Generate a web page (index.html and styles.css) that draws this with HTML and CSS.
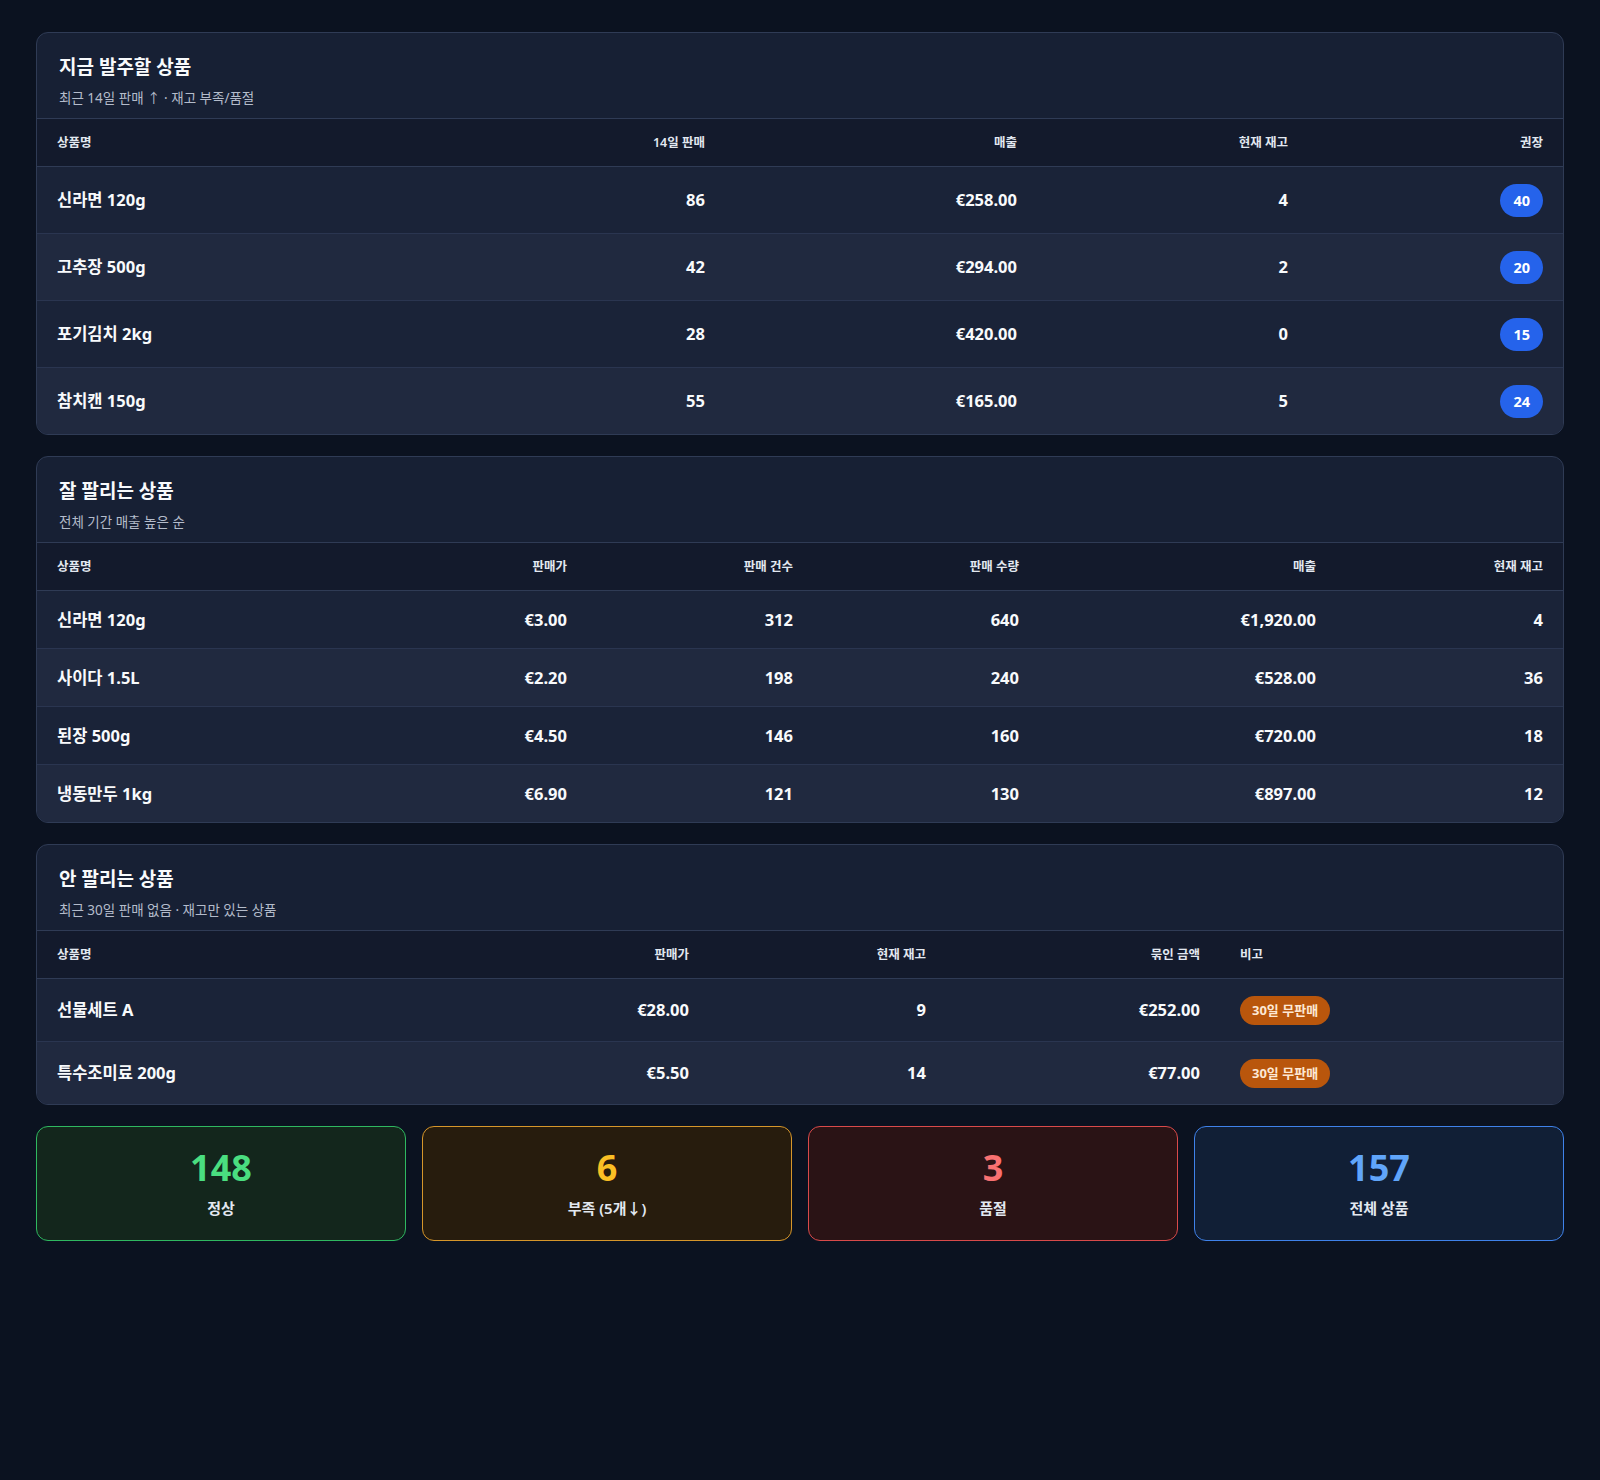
FILE: index.html
```html
<!DOCTYPE html>
<html lang="ko">
<head>
<meta charset="utf-8">
<title>재고 대시보드</title>
<link rel="stylesheet" href="styles.css">
</head>
<body>
<main class="page">

  <section class="card">
    <header class="card-head">
      <h2 class="card-title">지금 발주할 상품</h2>
      <p class="card-sub">최근 14일 판매 ↑ · 재고 부족/품절</p>
    </header>
    <table class="tbl">
      <colgroup>
        <col class="w-400"><col class="w-288"><col class="w-312"><col class="w-271"><col class="w-255">
      </colgroup>
      <thead>
        <tr><th class="l">상품명</th><th>14일 판매</th><th>매출</th><th>현재 재고</th><th>권장</th></tr>
      </thead>
      <tbody>
        <tr><td class="l">신라면 120g</td><td>86</td><td>€258.00</td><td>4</td><td><span class="pill blue">40</span></td></tr>
        <tr><td class="l">고추장 500g</td><td>42</td><td>€294.00</td><td>2</td><td><span class="pill blue">20</span></td></tr>
        <tr><td class="l">포기김치 2kg</td><td>28</td><td>€420.00</td><td>0</td><td><span class="pill blue">15</span></td></tr>
        <tr><td class="l">참치캔 150g</td><td>55</td><td>€165.00</td><td>5</td><td><span class="pill blue">24</span></td></tr>
      </tbody>
    </table>
  </section>

  <section class="card">
    <header class="card-head">
      <h2 class="card-title">잘 팔리는 상품</h2>
      <p class="card-sub">전체 기간 매출 높은 순</p>
    </header>
    <table class="tbl">
      <colgroup>
        <col class="w-330"><col class="w-220"><col class="w-226"><col class="w-226"><col class="w-297"><col class="w-227">
      </colgroup>
      <thead>
        <tr><th class="l">상품명</th><th>판매가</th><th>판매 건수</th><th>판매 수량</th><th>매출</th><th>현재 재고</th></tr>
      </thead>
      <tbody>
        <tr><td class="l">신라면 120g</td><td>€3.00</td><td>312</td><td>640</td><td>€1,920.00</td><td>4</td></tr>
        <tr><td class="l">사이다 1.5L</td><td>€2.20</td><td>198</td><td>240</td><td>€528.00</td><td>36</td></tr>
        <tr><td class="l">된장 500g</td><td>€4.50</td><td>146</td><td>160</td><td>€720.00</td><td>18</td></tr>
        <tr><td class="l">냉동만두 1kg</td><td>€6.90</td><td>121</td><td>130</td><td>€897.00</td><td>12</td></tr>
      </tbody>
    </table>
  </section>

  <section class="card">
    <header class="card-head">
      <h2 class="card-title">안 팔리는 상품</h2>
      <p class="card-sub">최근 30일 판매 없음 · 재고만 있는 상품</p>
    </header>
    <table class="tbl">
      <colgroup>
        <col class="w-400"><col class="w-272"><col class="w-237"><col class="w-274"><col class="w-343">
      </colgroup>
      <thead>
        <tr><th class="l">상품명</th><th>판매가</th><th>현재 재고</th><th>묶인 금액</th><th class="l">비고</th></tr>
      </thead>
      <tbody>
        <tr><td class="l">선물세트 A</td><td>€28.00</td><td>9</td><td>€252.00</td><td class="l"><span class="pill orange">30일 무판매</span></td></tr>
        <tr><td class="l">특수조미료 200g</td><td>€5.50</td><td>14</td><td>€77.00</td><td class="l"><span class="pill orange">30일 무판매</span></td></tr>
      </tbody>
    </table>
  </section>

  <section class="stats">
    <div class="stat green"><div class="stat-num">148</div><div class="stat-label">정상</div></div>
    <div class="stat yellow"><div class="stat-num">6</div><div class="stat-label">부족 (5개↓)</div></div>
    <div class="stat red"><div class="stat-num">3</div><div class="stat-label">품절</div></div>
    <div class="stat blue"><div class="stat-num">157</div><div class="stat-label">전체 상품</div></div>
  </section>

</main>
</body>
</html>
```

FILE: styles.css
```css
* { box-sizing: border-box; }

html, body {
  margin: 0;
  padding: 0;
  background: #0b1220;
  min-height: 1480px;
}

body {
  font-family: "Noto Sans", "Noto Sans CJK KR", sans-serif;
  color: #f1f5f9;
}

.page {
  padding: 32px 36px;
  display: flex;
  flex-direction: column;
  gap: 21px;
}

.card {
  background: #172034;
  border: 1px solid #2f3b55;
  border-radius: 12px;
  overflow: hidden;
}

.card-head {
  padding: 21px 22px 10px;
  border-bottom: 1px solid #2f3b55;
}

.card-title {
  margin: 0;
  font-size: 19px;
  line-height: 26px;
  font-weight: 700;
  color: #f8fafc;
}

.card-sub {
  margin: 8px 0 0;
  font-size: 13.5px;
  line-height: 20px;
  color: #b4bccb;
}

.tbl {
  width: 100%;
  border-collapse: collapse;
  table-layout: fixed;
}

.tbl th {
  background: #131a2c;
  font-size: 12.5px;
  line-height: 16px;
  font-weight: 600;
  color: #e2e8f0;
  text-align: right;
  padding: 16px 20px 15px;
  border-bottom: 1px solid #2f3b55;
}

.tbl td {
  font-size: 16.5px;
  line-height: 24px;
  font-weight: 700;
  color: #f8fafc;
  text-align: right;
  padding: 16.5px 20px;
  border-bottom: 1px solid #2a3550;
}

.tbl tbody tr:nth-child(odd) td { background: #1a2338; }
.tbl tbody tr:nth-child(even) td { background: #20293f; }
.tbl tbody tr:last-child td { border-bottom: none; }

.tbl .l { text-align: left; }

.w-400 { width: 400px; }
.w-288 { width: 288px; }
.w-312 { width: 312px; }
.w-271 { width: 271px; }
.w-255 { width: 255px; }
.w-330 { width: 330px; }
.w-220 { width: 220px; }
.w-226 { width: 226px; }
.w-297 { width: 297px; }
.w-227 { width: 227px; }
.w-272 { width: 272px; }
.w-237 { width: 237px; }
.w-274 { width: 274px; }
.w-343 { width: 343px; }

.pill {
  display: inline-block;
  border-radius: 999px;
  font-weight: 700;
  vertical-align: top;
}

.pill.blue {
  background: #2563eb;
  color: #ffffff;
  font-size: 14.5px;
  line-height: 33px;
  height: 33px;
  padding: 0 13px;
}

.pill.orange {
  background: #b9560c;
  color: #fde8d4;
  font-size: 13px;
  line-height: 29px;
  height: 29px;
  padding: 0 12px;
}

.stats {
  display: grid;
  grid-template-columns: repeat(4, 1fr);
  gap: 16px;
}

.stat {
  border: 1px solid;
  border-radius: 12px;
  padding: 19px 20px 22px;
  text-align: center;
}

.stat-num {
  font-size: 36px;
  line-height: 44px;
  font-weight: 700;
}

.stat-label {
  margin-top: 8px;
  font-size: 15px;
  line-height: 20px;
  font-weight: 600;
  color: #e2e8f0;
}

.stat.green { background: #13261c; border-color: #2fb860; }
.stat.green .stat-num { color: #4ade80; }

.stat.yellow { background: #271c0d; border-color: #d6962a; }
.stat.yellow .stat-num { color: #fbbf24; }

.stat.red { background: #2a1315; border-color: #d94a4a; }
.stat.red .stat-num { color: #f87171; }

.stat.blue { background: #111f36; border-color: #3f82ea; }
.stat.blue .stat-num { color: #60a5fa; }
```
